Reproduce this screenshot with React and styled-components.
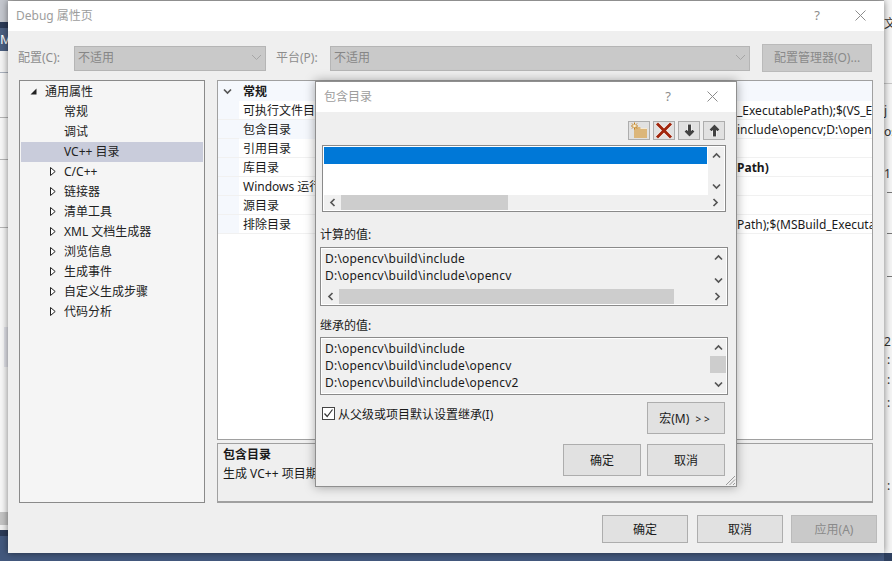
import styled, { createGlobalStyle } from "styled-components";

const GlobalStyle = createGlobalStyle`
  html, body {
    margin: 0;
    height: 561px;
    overflow: hidden;
    background: #f5f5f5;
  }
  body, button {
    font-family: "Noto Sans", "Noto Sans CJK SC", sans-serif;
    font-size: 12px;
    color: #1a1a1a;
  }
`;

const treeItems = [
  { label: "通用属性", kind: "open", level: 0 },
  { label: "常规", level: 1 },
  { label: "调试", level: 1 },
  { label: "VC++ 目录", level: 1, active: true },
  { label: "C/C++", kind: "closed", level: 1 },
  { label: "链接器", kind: "closed", level: 1 },
  { label: "清单工具", kind: "closed", level: 1 },
  { label: "XML 文档生成器", kind: "closed", level: 1 },
  { label: "浏览信息", kind: "closed", level: 1 },
  { label: "生成事件", kind: "closed", level: 1 },
  { label: "自定义生成步骤", kind: "closed", level: 1 },
  { label: "代码分析", kind: "closed", level: 1 },
];

const gridRows = [
  { name: "可执行文件目录", value: "_ExecutablePath);$(VS_ExecutablePath)" },
  { name: "包含目录", value: "include\\opencv;D:\\opencv\\build", tint: true },
  { name: "引用目录", value: "" },
  { name: "库目录", value: "Path)", bold: true },
  { name: "Windows 运行库目录", value: "" },
  { name: "源目录", value: "" },
  { name: "排除目录", value: "Path);$(MSBuild_ExecutablePath)" },
];

const chevrons = {
  up: "M1 6.5 L4.5 3 L8 6.5",
  down: "M1 2.5 L4.5 6 L8 2.5",
  left: "M6.5 1 L3 4.5 L6.5 8",
  right: "M2.5 1 L6 4.5 L2.5 8",
};

const Chevron = ({ dir }) => (
  <svg width="9" height="9" viewBox="0 0 9 9">
    <path d={chevrons[dir]} fill="none" stroke="#555" strokeWidth="1.7" />
  </svg>
);

const CloseIcon = () => (
  <svg width="11" height="11" viewBox="0 0 11 11">
    <path d="M0.5 0.5 L10.5 10.5 M10.5 0.5 L0.5 10.5" stroke="#8c8c8c" strokeWidth="1" />
  </svg>
);

const ComboArrow = () => (
  <svg width="11" height="7" viewBox="0 0 11 7">
    <path d="M1 1 L5.5 5.5 L10 1" fill="none" stroke="#a6a6a6" strokeWidth="1" />
  </svg>
);

const NewFolderIcon = () => (
  <svg width="18" height="17" viewBox="0 0 18 17">
    <path d="M4 5 H10 L11.5 7 H17 V16 H4 Z" fill="#dcb67a" />
    <path d="M10.5 6.5 H17" stroke="#f6e9d0" strokeWidth="1" />
    <path
      d="M4.5 0.5 V7.5 M1 4 H8 M2 1.5 L7 6.5 M7 1.5 L2 6.5"
      stroke="#c27d1a"
      strokeWidth="1"
    />
    <circle cx="4.5" cy="4" r="1.4" fill="#fff3d0" />
  </svg>
);

const DeleteIcon = () => (
  <svg width="18" height="17" viewBox="0 0 18 17">
    <path d="M2 1.5 L16 15.5 M16 1.5 L2 15.5" stroke="#fff" strokeWidth="4.5" opacity="0.8" />
    <path d="M2 1.5 L16 15.5 M16 1.5 L2 15.5" stroke="#a1260d" strokeWidth="3" />
  </svg>
);

const ArrowIcon = ({ up }) => (
  <svg width="13" height="15" viewBox="0 0 13 15">
    <g transform={up ? undefined : "rotate(180 6.5 7.5)"}>
      <path
        d="M6.5 1.5 L11.5 6.5 L9.5 8.2 L8 7 V13.5 H5 V7 L3.5 8.2 L1.5 6.5 Z"
        fill="#424242"
        stroke="#fff"
        strokeWidth="1"
        paintOrder="stroke"
      />
    </g>
  </svg>
);

const CheckIcon = () => (
  <svg width="11" height="11" viewBox="0 0 11 11">
    <path d="M1.5 5.5 L4.2 8.5 L9.5 1.5" fill="none" stroke="#333" strokeWidth="1.2" />
  </svg>
);

const TreeArrow = ({ open }) =>
  open ? (
    <svg width="7" height="7" viewBox="0 0 7 7">
      <path d="M6.5 0.5 V6.5 H0.5 Z" fill="#222" />
    </svg>
  ) : (
    <svg width="6" height="9" viewBox="0 0 6 9">
      <path d="M0.5 0.5 L5.2 4.5 L0.5 8.5 Z" fill="#fff" stroke="#222" strokeWidth="1" />
    </svg>
  );

const GripIcon = () => (
  <svg width="11" height="11" viewBox="0 0 11 11">
    <path d="M10 1 L1 10 M10 4.5 L4.5 10 M10 8 L8 10" stroke="#9a9a9a" strokeWidth="1" />
  </svg>
);

const HScroll = ({ thumb }) => (
  <HBar>
    <ArrowCell $wide>
      <Chevron dir="left" />
    </ArrowCell>
    <HThumb style={{ width: thumb }} />
    <HTrack />
    <ArrowCell $wide>
      <Chevron dir="right" />
    </ArrowCell>
  </HBar>
);

const VScroll = ({ thumb }) => (
  <VBar>
    <ArrowCell>
      <Chevron dir="up" />
    </ArrowCell>
    {thumb && <VThumb style={{ height: thumb }} />}
    <VTrack />
    <ArrowCell>
      <Chevron dir="down" />
    </ArrowCell>
  </VBar>
);

const App = () => {
  return (
    <Desktop>
      <GlobalStyle />
      <LeftEdge>
        <Band $h={22} $bg="#c4c7ce" />
        <Band $h={6} $bg="#2c3b57" />
        <Band $h={23} $bg="#4b5f80">
          <EdgeLetter>M</EdgeLetter>
        </Band>
        <Band $h={21} $bg="#f4f4f4" />
        <Band $h={1} $bg="#a9b0bc" />
        <Band $h={44} $bg="#f7f7f7" />
        <Band $h={1} $bg="#b5b5b5" />
        <Band $h={41} $bg="#f7f7f7" />
        <Band $h={1} $bg="#b5b5b5" />
        <Band $h={67} $bg="#f7f7f7" />
        <Band $h={1} $bg="#b5b5b5" />
        <Band $h={99} $bg="#f7f7f7" />
        <Band $h={40} $bg="linear-gradient(to right, #f7f7f7 4px, #e2e3ea 4px)" />
        <Band $h={145} $bg="#f7f7f7" />
        <Band $h={13} $bg="#c4c4c4" />
        <Band $h={5} $bg="#f0f0f0" />
        <Band $h={6} $bg="#2c3b57" />
        <Band $h={25} $bg="#43587d" />
      </LeftEdge>

      <Center>
        <TopGap />
        <Dialog>
          <TitleBar>
            <DimTitle>Debug 属性页</DimTitle>
            <TitleControls $gap={35}>
              <HelpMark>?</HelpMark>
              <CloseIcon />
            </TitleControls>
          </TitleBar>

          <DialogBody>
            <ConfigRow>
              <ConfigLabel $width={56}>配置(C):</ConfigLabel>
              <Combo $width={192}>
                不适用
                <ComboArrow />
              </Combo>
              <ConfigLabel $width={54} $indent={10}>
                平台(P):
              </ConfigLabel>
              <Combo $width={420}>
                不适用
                <ComboArrow />
              </Combo>
              <ManagerButton>配置管理器(O)...</ManagerButton>
            </ConfigRow>

            <MainRow>
              <Tree>
                {treeItems.map((item) => (
                  <TreeRow key={item.label} $active={item.active}>
                    <TreeArrowSlot $level={item.level}>
                      {item.kind && <TreeArrow open={item.kind === "open"} />}
                    </TreeArrowSlot>
                    {item.label}
                  </TreeRow>
                ))}
              </Tree>

              <RightColumn>
                <PropertyGrid>
                  <GroupRow>
                    <GroupGlyph>
                      <Chevron dir="down" />
                    </GroupGlyph>
                    <b>常规</b>
                  </GroupRow>
                  {gridRows.map((row) => (
                    <PropRow key={row.name}>
                      <PropName $tint={row.tint}>{row.name}</PropName>
                      <PropValue $bold={row.bold}>{row.value}</PropValue>
                    </PropRow>
                  ))}
                </PropertyGrid>
                <Description>
                  <b>包含目录</b>
                  <span>生成 VC++ 项目期间，搜索包含文件时使用的路径。</span>
                </Description>
              </RightColumn>
            </MainRow>

            <Footer>
              <PushButton $width={86} $height={28} $after={1}>
                确定
              </PushButton>
              <PushButton $width={86} $height={28}>
                取消
              </PushButton>
              <PushButton $width={86} $height={28} $disabled>
                应用(A)
              </PushButton>
            </Footer>
          </DialogBody>

          <SubDialog>
            <SubTitleBar>
              <DimTitle>包含目录</DimTitle>
              <TitleControls $gap={36}>
                <HelpMark>?</HelpMark>
                <CloseIcon />
              </TitleControls>
            </SubTitleBar>

            <SubBody>
              <ToolRow>
                <ToolButton>
                  <NewFolderIcon />
                </ToolButton>
                <ToolButton>
                  <DeleteIcon />
                </ToolButton>
                <ToolButton>
                  <ArrowIcon />
                </ToolButton>
                <ToolButton>
                  <ArrowIcon up />
                </ToolButton>
              </ToolRow>

              <ListBox $height={67} $inset={2} $bg="#fff">
                <ListContent>
                  <SelectedLine />
                </ListContent>
                <VScroll />
                <HScroll thumb={167} />
              </ListBox>

              <FieldLabel $top={14} $bottom={4}>
                计算的值:
              </FieldLabel>
              <ListBox $height={59} $bg="#f0f0f0">
                <PathList>
                  <PathLine>D:\opencv\build\include</PathLine>
                  <PathLine>D:\opencv\build\include\opencv</PathLine>
                </PathList>
                <VScroll />
                <HScroll thumb={335} />
              </ListBox>

              <FieldLabel $top={11} $bottom={3}>
                继承的值:
              </FieldLabel>
              <ListBox $height={58} $bg="#f0f0f0">
                <PathList>
                  <PathLine>D:\opencv\build\include</PathLine>
                  <PathLine>D:\opencv\build\include\opencv</PathLine>
                  <PathLine>D:\opencv\build\include\opencv2</PathLine>
                </PathList>
                <VScroll thumb={17} />
              </ListBox>

              <InheritRow>
                <CheckLabel>
                  <CheckBox>
                    <CheckIcon />
                  </CheckBox>
                  从父级或项目默认设置继承(I)
                </CheckLabel>
                <PushButton $width={78} $height={32}>
                  宏(M) <MacroArrows>&gt;&gt;</MacroArrows>
                </PushButton>
              </InheritRow>

              <SubFooter>
                <PushButton $width={78} $height={32}>
                  确定
                </PushButton>
                <PushButton $width={78} $height={32}>
                  取消
                </PushButton>
              </SubFooter>
            </SubBody>
            <Grip>
              <GripIcon />
            </Grip>
          </SubDialog>
        </Dialog>
        <BottomBand />
      </Center>

      <RightEdge>
        <EdgeText $top={16}>文</EdgeText>
        <EdgeRule $top={51} />
        <EdgeText $top={19}>j</EdgeText>
        <EdgeText $top={5}>os</EdgeText>
        <EdgeText $top={26}>1</EdgeText>
        <EdgeRule $top={10} $short />
        <EdgeRule $top={40} $short />
        <EdgeRule $top={42} $short />
        <EdgeText $top={57}>2</EdgeText>
        <EdgeText $top={2} $indent={3}>:</EdgeText>
        <EdgeText $top={4} $indent={3}>:</EdgeText>
        <EdgeText $top={7} $indent={3}>:</EdgeText>
        <EdgeText $top={67} $indent={3}>:</EdgeText>
        <EdgeBase />
      </RightEdge>
    </Desktop>
  );
};

const Desktop = styled.div`
  display: flex;
  width: 892px;
  height: 561px;
  overflow: hidden;
`;

const LeftEdge = styled.div`
  width: 8px;
  display: flex;
  flex-direction: column;
  flex-shrink: 0;
`;

const Band = styled.div`
  height: ${(p) => p.$h}px;
  background: ${(p) => p.$bg};
  flex-shrink: 0;
  overflow: hidden;
`;

const EdgeLetter = styled.div`
  color: #fff;
  font-size: 13px;
  line-height: 23px;
`;

const Center = styled.div`
  width: 876px;
  display: flex;
  flex-direction: column;
  flex-shrink: 0;
  position: relative;
  z-index: 1;
`;

const TopGap = styled.div`
  height: 1px;
  background: #b9b9b9;
`;

const Dialog = styled.div`
  position: relative;
  height: 552px;
  display: flex;
  flex-direction: column;
  background: #efefef;
  box-shadow: 0 0 7px rgba(0, 0, 0, 0.5);
`;

const BottomBand = styled.div`
  flex: 1;
  background: #43587d;
`;

const RightEdge = styled.div`
  width: 8px;
  height: 561px;
  flex-shrink: 0;
  display: flex;
  flex-direction: column;
  background: #f5f5f5;
  overflow: hidden;
  white-space: nowrap;
`;

const EdgeText = styled.div`
  margin-top: ${(p) => p.$top}px;
  padding-left: ${(p) => p.$indent || 0}px;
  height: 16px;
  line-height: 16px;
  color: #333;
  flex-shrink: 0;
`;

const EdgeRule = styled.div`
  margin-top: ${(p) => p.$top}px;
  margin-left: ${(p) => (p.$short ? 3 : 0)}px;
  height: 1px;
  background: ${(p) => (p.$short ? "#777" : "#c8c8c8")};
  flex-shrink: 0;
`;

const EdgeBase = styled.div`
  margin-top: auto;
  height: 8px;
  flex-shrink: 0;
  background: #2f4160;
`;

const TitleBar = styled.div`
  height: 30px;
  flex-shrink: 0;
  box-sizing: border-box;
  background: #fff;
  display: flex;
  align-items: center;
  justify-content: space-between;
  padding: 0 18px 2px 8px;
`;

const DimTitle = styled.div`
  color: #9d9d9d;
`;

const TitleControls = styled.div`
  display: flex;
  align-items: center;
  gap: ${(p) => p.$gap}px;
`;

const HelpMark = styled.span`
  color: #8c8c8c;
  font-size: 13px;
`;

const DialogBody = styled.div`
  flex: 1;
  display: flex;
  flex-direction: column;
  padding: 13px 7px 10px 11px;
  min-height: 0;
`;

const ConfigRow = styled.div`
  display: flex;
  align-items: center;
  height: 28px;
  margin-left: -1px;
`;

const ConfigLabel = styled.div`
  width: ${(p) => p.$width}px;
  padding-left: ${(p) => p.$indent || 0}px;
  padding-bottom: 2px;
  box-sizing: content-box;
  flex-shrink: 0;
  color: #8d8d8d;
  white-space: nowrap;
`;

const Combo = styled.div`
  width: ${(p) => p.$width}px;
  height: 25px;
  box-sizing: border-box;
  flex-shrink: 0;
  display: flex;
  align-items: center;
  justify-content: space-between;
  padding: 0 3px 2px 3px;
  background: #c9c9c9;
  border: 1px solid #b5b5b5;
  color: #868686;
`;

const ManagerButton = styled.button`
  width: 110px;
  height: 28px;
  margin-left: 12px;
  padding: 0 0 2px;
  background: #c9c9c9;
  border: 1px solid #bababa;
  color: #8a8a8a;
  white-space: nowrap;
`;

const MainRow = styled.div`
  display: flex;
  gap: 12px;
  height: 423px;
  margin: 8px 4px 0 0;
`;

const Tree = styled.div`
  width: 186px;
  box-sizing: border-box;
  border: 1px solid #8a8a8a;
  background: #f5f5f5;
  padding: 1px 1px 0;
`;

const TreeRow = styled.div`
  height: 20px;
  box-sizing: border-box;
  padding-bottom: 2px;
  display: flex;
  align-items: center;
  background: ${(p) => (p.$active ? "#c9ccdb" : "transparent")};
  color: #222;
`;

const TreeArrowSlot = styled.div`
  width: ${(p) => (p.$level === 0 ? 24 : 43)}px;
  flex-shrink: 0;
  display: flex;
  align-items: center;
  justify-content: flex-end;
  padding-right: 8px;
  box-sizing: border-box;
`;

const RightColumn = styled.div`
  flex: 1;
  min-width: 0;
  display: flex;
  flex-direction: column;
  gap: 3px;
`;

const PropertyGrid = styled.div`
  height: 360px;
  box-sizing: border-box;
  border: 1px solid #a0a0a0;
  background: #fff;
  overflow: hidden;
`;

const GroupRow = styled.div`
  height: 20px;
  display: flex;
  align-items: center;
  background: #f5f8fd;
`;

const GroupGlyph = styled.div`
  width: 25px;
  padding-left: 5px;
  box-sizing: border-box;
  display: flex;
`;

const PropRow = styled.div`
  height: 19px;
  display: flex;
  align-items: center;
  white-space: nowrap;
  background: linear-gradient(to right, #f5f8fd 21px, #fff 21px);
  box-shadow: inset 0 -1px 0 #f1f1f1;
`;

const PropName = styled.div`
  width: 498px;
  height: 100%;
  line-height: 20px;
  margin-left: 21px;
  padding-left: 4px;
  box-sizing: border-box;
  flex-shrink: 0;
  background: ${(p) => (p.$tint ? "#f5f8fd" : "transparent")};
`;

const PropValue = styled.div`
  font-weight: ${(p) => (p.$bold ? 700 : 400)};
`;

const Description = styled.div`
  flex: 1;
  display: flex;
  flex-direction: column;
  gap: 2px;
  padding: 2px 5px;
  border: 1px solid #a0a0a0;
  border-bottom-width: 2px;
  line-height: 17px;
  white-space: nowrap;
  overflow: hidden;
`;

const Footer = styled.div`
  display: flex;
  justify-content: flex-end;
  gap: 8px;
  margin-top: 12px;
`;

const PushButton = styled.button`
  width: ${(p) => p.$width}px;
  height: ${(p) => p.$height}px;
  margin-right: ${(p) => p.$after || 0}px;
  padding: 0;
  box-sizing: border-box;
  background: ${(p) => (p.$disabled ? "#c9c9c9" : "#e1e1e1")};
  border: 1px solid ${(p) => (p.$disabled ? "#bababa" : "#adadad")};
  color: ${(p) => (p.$disabled ? "#8a8a8a" : "#1a1a1a")};
  white-space: nowrap;
`;

const SubDialog = styled.div`
  position: absolute;
  left: 307px;
  top: 80px;
  width: 422px;
  height: 406px;
  box-sizing: border-box;
  display: flex;
  flex-direction: column;
  background: #efefef;
  border: 1px solid #8f8f8f;
  box-shadow: 0 0 10px rgba(0, 0, 0, 0.35);
`;

const SubTitleBar = styled(TitleBar)`
  padding: 0 18px 2px 8px;
`;

const SubBody = styled.div`
  flex: 1;
  display: flex;
  flex-direction: column;
  padding: 9px 8px 0 4px;
`;

const ToolRow = styled.div`
  display: flex;
  justify-content: flex-end;
  gap: 3px;
  padding-right: 3px;
  margin-bottom: 5px;
`;

const ToolButton = styled.button`
  width: 22px;
  height: 19px;
  padding: 0;
  display: flex;
  align-items: center;
  justify-content: center;
  background: #e1e1e1;
  border: 1px solid #adadad;
`;

const ListBox = styled.div`
  height: ${(p) => p.$height}px;
  margin: 0 ${(p) => p.$inset || 0}px;
  box-sizing: border-box;
  flex-shrink: 0;
  display: grid;
  grid-template-columns: minmax(0, 1fr) 16px;
  grid-template-rows: minmax(0, 1fr) auto;
  border: 1px solid #8a8a8a;
  padding: 1px;
  background: #fff;
  --list-bg: ${(p) => p.$bg};
`;

const ListContent = styled.div`
  background: var(--list-bg);
  overflow: hidden;
`;

const PathList = styled(ListContent)`
  padding-top: 1px;
`;

const SelectedLine = styled.div`
  height: 17px;
  margin-right: 1px;
  background: #0078d7;
`;

const PathLine = styled.div`
  height: 17px;
  line-height: 17px;
  padding-left: 3px;
  letter-spacing: 0.2px;
  white-space: nowrap;
`;

const VBar = styled.div`
  display: flex;
  flex-direction: column;
  background: #f0f0f0;
`;

const VThumb = styled.div`
  background: #cdcdcd;
  flex-shrink: 0;
`;

const VTrack = styled.div`
  flex: 1;
`;

const HBar = styled.div`
  grid-column: 1 / 3;
  height: 15px;
  display: flex;
  background: #f0f0f0;
`;

const HThumb = styled.div`
  background: #cdcdcd;
  flex-shrink: 0;
`;

const HTrack = styled.div`
  flex: 1;
`;

const ArrowCell = styled.div`
  width: ${(p) => (p.$wide ? "17px" : "auto")};
  height: ${(p) => (p.$wide ? "auto" : "17px")};
  flex-shrink: 0;
  display: flex;
  align-items: center;
  justify-content: center;
`;

const FieldLabel = styled.div`
  height: 17px;
  line-height: 17px;
  margin-top: ${(p) => p.$top}px;
  margin-bottom: ${(p) => p.$bottom}px;
`;

const InheritRow = styled.div`
  display: flex;
  justify-content: space-between;
  align-items: flex-start;
  margin-top: 7px;
  padding: 0 3px 0 2px;
`;

const CheckLabel = styled.div`
  display: flex;
  align-items: center;
  gap: 3px;
  height: 17px;
  margin-top: 3px;
`;

const CheckBox = styled.div`
  width: 13px;
  height: 13px;
  box-sizing: border-box;
  border: 1px solid #444;
  background: #fff;
  display: flex;
  align-items: center;
  justify-content: center;
`;

const MacroArrows = styled.span`
  font-size: 10px;
  letter-spacing: 3px;
  margin-left: 3px;
`;

const SubFooter = styled.div`
  display: flex;
  justify-content: flex-end;
  gap: 6px;
  margin-top: 10px;
  padding-right: 3px;
`;

const Grip = styled.div`
  position: absolute;
  right: 0;
  bottom: 0;
  line-height: 0;
`;

export default App;
